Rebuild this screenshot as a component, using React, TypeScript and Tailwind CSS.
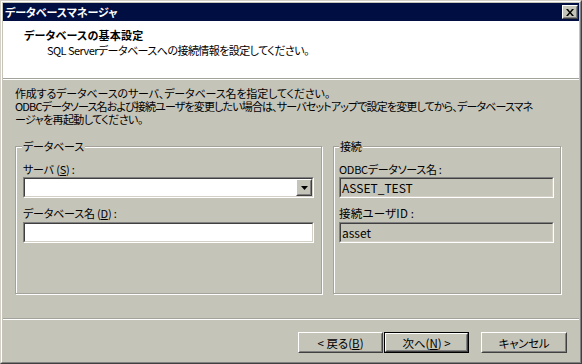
import React from "react";

function Sunken({ children, white }: { children?: React.ReactNode; white?: boolean }) {
  return (
    <div className="h-[21px] border border-t-[#808080] border-l-[#808080] border-b-white border-r-white">
      <div
        className={
          "h-full border border-t-[#404040] border-l-[#404040] border-b-[#d4d0c8] border-r-[#d4d0c8] flex items-center " +
          (white ? "bg-white" : "bg-[#c5c4b8]")
        }
      >
        {children}
      </div>
    </div>
  );
}

function Raised({ children, className }: { children?: React.ReactNode; className?: string }) {
  return (
    <div className={"border border-t-white border-l-white border-r-[#404040] border-b-[#404040] bg-[#c5c4b8] " + (className ?? "")}>
      <div className="h-full w-full border border-t-[#c5c4b8] border-l-[#c5c4b8] border-r-[#808080] border-b-[#808080] flex items-center justify-center">
        {children}
      </div>
    </div>
  );
}

function Group({ label, children, className, labelClass }: { label: string; children: React.ReactNode; className: string; labelClass: string }) {
  return (
    <div className={"relative h-[148px] border border-[#a3a39b] shadow-[inset_1px_1px_0_white,1px_1px_0_white] " + className}>
      <div className={"absolute top-[-8px] bg-[#c5c4b8] px-px leading-[14px] text-[11px] tracking-[-0.2px] " + labelClass}>{label}</div>
      {children}
    </div>
  );
}

export default function App() {
  return (
    <div className="w-[582px] h-[364px] flex flex-col border border-t-[#d4d0c8] border-l-[#d4d0c8] border-r-[#404040] border-b-[#404040] bg-[#c5c4b8] text-[12px] text-black font-['Noto_Sans_CJK_JP','Noto_Sans',sans-serif] [font-feature-settings:'palt']">
      <div className="flex-1 flex flex-col border border-t-white border-l-white border-r-[#808080] border-b-[#808080] p-px">
        {/* title bar */}
        <div className="h-[18px] bg-[#010e42] flex items-center justify-between pl-[2px] pr-[1px]">
          <span className="text-white font-bold leading-[14px] text-[11px] tracking-[-0.05px]">データベースマネージャ</span>
          <Raised className="w-[16px] h-[14px]">
            <svg width="8" height="7" viewBox="0 0 8 7">
              <path d="M0 0h2l2 2.5L6 0h2L5 3.5 8 7H6L4 4.5 2 7H0l3-3.5z" fill="black" />
            </svg>
          </Raised>
        </div>
        {/* client */}
        <div className="flex-1 flex flex-col">
          <div className="h-[57px] bg-white pt-[7px] pl-[21px]">
            <div className="font-bold leading-[15px] text-[11px] tracking-[0.2px]">データベースの基本設定</div>
            <div className="leading-[15px] pl-[23px] text-[11px] tracking-[-0.55px]">SQL Serverデータベースへの接続情報を設定してください。</div>
          </div>
          <div className="h-[2px] border-t border-t-[#a3a39b] border-b border-b-white" />
          <div className="h-[66px] pt-[7px] pl-[12px] leading-[13px] whitespace-nowrap text-[11px]">
            <div className="tracking-[-0.15px]">作成するデータベースのサーバ、データベース名を指定してください。</div>
            <div className="tracking-[-0.85px]">ODBCデータソース名および接続ユーザを変更したい場合は、サーバセットアップで設定を変更してから、データベースマネ</div>
            <div className="tracking-[-0.6px]">ージャを再起動してください。</div>
          </div>
          <div className="h-[148px] flex pl-[12px] gap-[11px]">
            <Group label="データベース" className="w-[307px] px-[7px]" labelClass="left-[6px]">
              <div className="pt-[15px] leading-[14px] text-[11px] tracking-[-0.2px]">
                サーバ (<span className="underline">S</span>) :
              </div>
              <div className="mt-[1px]">
                <Sunken white>
                  <div className="flex-1" />
                  <Raised className="w-[16px] h-full">
                    <svg width="7" height="4" viewBox="0 0 7 4">
                      <path d="M0 0h7L3.5 4z" fill="black" />
                    </svg>
                  </Raised>
                </Sunken>
              </div>
              <div className="mt-[8px] leading-[14px] text-[11px] tracking-[-0.2px]">
                データベース名 (<span className="underline">D</span>) :
              </div>
              <div className="mt-[2px]">
                <Sunken white />
              </div>
            </Group>
            <Group label="接続" className="w-[228px] pl-[5px] pr-[6px]" labelClass="left-[5px]">
              <div className="pt-[15px] leading-[14px] text-[11px] tracking-[-0.3px]">ODBCデータソース名 :</div>
              <div className="mt-[1px]">
                <Sunken>
                  <span className="pl-px leading-[14px]">ASSET_TEST</span>
                </Sunken>
              </div>
              <div className="mt-[8px] leading-[14px] text-[11.5px] tracking-[0.2px]">接続ユーザID :</div>
              <div className="mt-[2px]">
                <Sunken>
                  <span className="pl-px leading-[14px]">asset</span>
                </Sunken>
              </div>
            </Group>
          </div>
          <div className="mt-[24px] h-[2px] border-t border-t-[#a3a39b] border-b border-b-white" />
          <div className="mt-[12px] h-[21px] flex justify-end pr-[12px] text-[11.5px]">
            <Raised className="w-[85px] h-full">
              <span className="leading-[14px]">
                &lt; 戻る(<span className="underline">B</span>)
              </span>
            </Raised>
            <div className="ml-px w-[85px] h-full border border-black">
              <Raised className="w-full h-full">
                <span className="leading-[14px]">
                  次へ(<span className="underline">N</span>) &gt;
                </span>
              </Raised>
            </div>
            <Raised className="ml-[12px] w-[86px] h-full">
              <span className="leading-[14px] tracking-[-0.3px]">キャンセル</span>
            </Raised>
          </div>
        </div>
      </div>
    </div>
  );
}
